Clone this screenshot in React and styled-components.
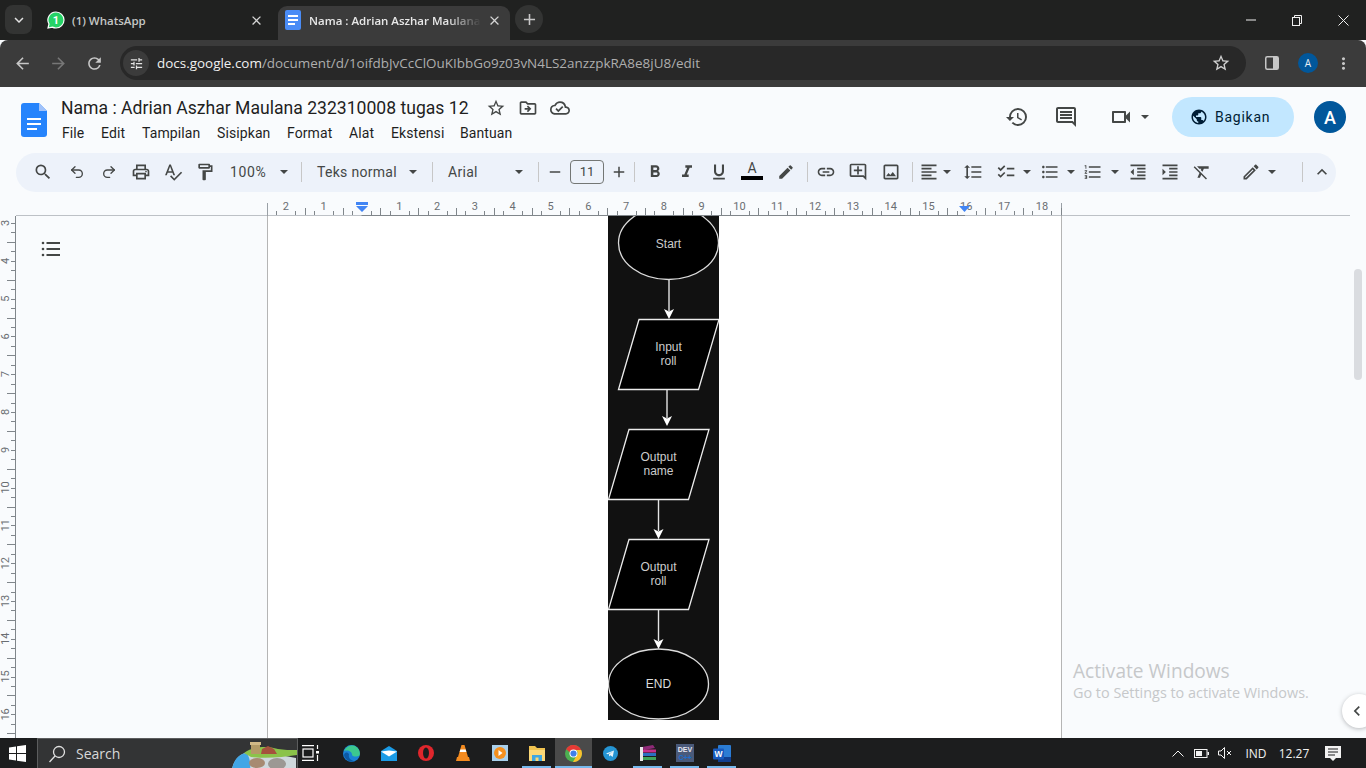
import styled, { createGlobalStyle } from "styled-components";
import { Undo2, Redo2 } from "lucide-react";
import {
  MdAdd,
  MdArrowBack,
  MdArrowForward,
  MdChecklist,
  MdClose,
  MdExpandLess,
  MdFormatAlignLeft,
  MdFormatBold,
  MdFormatClear,
  MdFormatIndentDecrease,
  MdFormatIndentIncrease,
  MdFormatItalic,
  MdFormatLineSpacing,
  MdFormatListBulleted,
  MdFormatListNumbered,
  MdFormatUnderlined,
  MdHistory,
  MdInsertLink,
  MdKeyboardArrowDown,
  MdKeyboardArrowLeft,
  MdMoreVert,
  MdOutlineAddComment,
  MdOutlineCloudDone,
  MdOutlineDriveFileMove,
  MdOutlineEdit,
  MdEdit,
  MdOutlineFormatPaint,
  MdOutlineImage,
  MdOutlinePrint,
  MdOutlineTune,
  MdPublic,
  MdRefresh,
  MdRemove,
  MdSearch,
  MdSpellcheck,
  MdStarBorder,
  MdOutlineComment,
  MdOutlineVideocam,
} from "react-icons/md";

const GlobalStyle = createGlobalStyle`
  html, body {
    margin: 0;
    height: 100%;
    overflow: hidden;
    background: #f9fbfd;
  }
  * { box-sizing: border-box; }
`;

const Page = styled.div`
  width: 1366px;
  height: 768px;
  display: flex;
  flex-direction: column;
  font-family: "Open Sans", "Liberation Sans", sans-serif;
  overflow: hidden;
`;

/* ---------- browser chrome ---------- */

const TabStrip = styled.div`
  height: 40px;
  background: #202120;
  display: flex;
  align-items: flex-end;
  padding-left: 5px;
  flex-shrink: 0;
`;

const TabMenu = styled.div`
  width: 27px;
  height: 29px;
  border-radius: 8px;
  background: #333433;
  color: #e3e3e3;
  display: flex;
  align-items: center;
  justify-content: center;
  align-self: flex-start;
  margin-top: 5px;
  margin-right: 6px;
  font-size: 18px;
`;

const Tab = styled.div`
  width: ${(p) => p.$w}px;
  height: 34px;
  display: flex;
  align-items: center;
  border-radius: 9px 9px 0 0;
  background: ${(p) => (p.$active ? "#3b3b3b" : "transparent")};
  color: ${(p) => (p.$active ? "#e8e8e8" : "#c4c7c5")};
  padding: 0 ${(p) => p.$pr}px 6px ${(p) => p.$pl}px;
  margin-right: ${(p) => p.$mr || 0}px;
  font-size: 11.5px;
  font-weight: 600;
  flex-shrink: 0;
`;

const TabTitle = styled.span`
  margin-left: ${(p) => p.$ml}px;
  width: ${(p) => p.$w}px;
  white-space: nowrap;
  overflow: hidden;
  mask-image: ${(p) => (p.$fade ? "linear-gradient(to right, #000 80%, transparent)" : "none")};
`;

const TabClose = styled.span`
  display: flex;
  margin-left: auto;
  font-size: 15px;
  color: #d5d5d5;
`;

const NewTab = styled.div`
  width: 28px;
  height: 28px;
  border-radius: 50%;
  background: #333433;
  color: #c7c7c7;
  display: flex;
  align-items: center;
  justify-content: center;
  align-self: flex-start;
  margin-top: 5px;
  font-size: 19px;
`;

const WindowControls = styled.div`
  margin-left: auto;
  align-self: flex-start;
  height: 40px;
  display: flex;
  align-items: center;
  color: #f0f0f0;
`;

const WindowButton = styled.div`
  width: 46px;
  display: flex;
  justify-content: center;
`;

const UrlRow = styled.div`
  height: 47px;
  background: #3b3b3b;
  border-radius: 8px 8px 0 0;
  display: flex;
  align-items: center;
  padding-bottom: 1px;
  flex-shrink: 0;
  color: #c7c7c7;
`;

const NavButton = styled.div`
  width: ${(p) => p.$w || 36}px;
  display: flex;
  justify-content: center;
  font-size: ${(p) => p.$size || 19}px;
  color: ${(p) => p.$color || "#c7c7c7"};
  margin-left: ${(p) => p.$ml || 0}px;
  flex-shrink: 0;
`;

const AddressBar = styled.div`
  width: 1126px;
  height: 34px;
  margin-left: 8px;
  margin-right: 8px;
  padding: 0 3px;
  border-radius: 17px;
  background: #282828;
  display: flex;
  align-items: center;
  flex-shrink: 0;
`;

const SiteInfo = styled.div`
  width: 26px;
  height: 26px;
  border-radius: 50%;
  background: #3b3b3b;
  color: #e3e3e3;
  display: flex;
  align-items: center;
  justify-content: center;
  font-size: 15px;
`;

const Url = styled.div`
  margin-left: 8px;
  font-size: 13.45px;
  color: #aeaeae;
  white-space: nowrap;
  & b {
    font-weight: 400;
    color: #f0f0f0;
  }
`;

const BarStar = styled.div`
  margin-left: auto;
  margin-right: 12px;
  display: flex;
  font-size: 20px;
  color: #d0d0d0;
`;

const ChromeAvatar = styled.div`
  width: 20px;
  height: 20px;
  border-radius: 50%;
  background: #01579b;
  color: #e6eef5;
  font-size: 10px;
  display: flex;
  align-items: center;
  justify-content: center;
  margin-left: 8px;
  flex-shrink: 0;
`;

/* ---------- docs header ---------- */

const DocsHeader = styled.div`
  height: 66px;
  background: #f9fbfd;
  display: flex;
  align-items: flex-start;
  padding: 10px 20px 0 21px;
  flex-shrink: 0;
`;

const DocsLogo = styled.div`
  margin-top: 6px;
  margin-right: 14px;
  display: flex;
`;

const TitleBlock = styled.div`
  display: flex;
  flex-direction: column;
`;

const TitleRow = styled.div`
  display: flex;
  align-items: center;
  height: 22px;
  color: #444746;
`;

const DocTitle = styled.div`
  font-family: "Roboto", sans-serif;
  font-size: 17.58px;
  color: #1f1f1f;
  white-space: nowrap;
  margin-right: 17px;
`;

const TitleIcon = styled.span`
  display: flex;
  width: 32px;
  font-size: 20px;
`;

const MenuBar = styled.div`
  display: flex;
  margin-top: 4px;
  margin-left: 1px;
`;

const MenuItem = styled.div`
  font-family: "Roboto", sans-serif;
  font-size: 14px;
  letter-spacing: 0.1px;
  line-height: 20px;
  color: #1f1f1f;
  width: ${(p) => p.$w}px;
`;

const HeaderActions = styled.div`
  margin-left: auto;
  display: flex;
  align-items: center;
  height: 40px;
  color: #444746;
`;

const HeaderIcon = styled.span`
  display: flex;
  font-size: 24px;
  margin-right: ${(p) => p.$mr}px;
`;

const ShareButton = styled.div`
  width: 122px;
  height: 40px;
  border-radius: 20px;
  background: #c2e7ff;
  color: #001d35;
  display: flex;
  align-items: center;
  padding-left: 18px;
  font-family: "Roboto", sans-serif;
  font-size: 14px;
  letter-spacing: 0.75px;
  margin-right: 20px;
  & svg {
    font-size: 18px;
    margin-right: 7px;
  }
`;

const DocsAvatar = styled.div`
  width: 32px;
  height: 32px;
  border-radius: 50%;
  background: #01579b;
  color: #fff;
  font-family: "Roboto", sans-serif;
  font-size: 18px;
  font-weight: 500;
  display: flex;
  align-items: center;
  justify-content: center;
`;

/* ---------- formatting toolbar ---------- */

const ToolbarPill = styled.div`
  width: 1320px;
  height: 39px;
  margin-left: 16px;
  border-radius: 20px;
  background: #edf2fa;
  display: flex;
  align-items: center;
  padding: 0 0 2px 11px;
  color: #444746;
  flex-shrink: 0;
`;

const ToolButton = styled.div`
  width: ${(p) => p.$w || 32}px;
  margin-left: ${(p) => p.$ml || 0}px;
  display: flex;
  justify-content: center;
  align-items: center;
  font-size: ${(p) => p.$size || 20}px;
  flex-shrink: 0;
`;

const Caret = styled.span`
  width: 8px;
  height: 4px;
  margin-left: ${(p) => (p.$ml || 0) + 1}px;
  margin-right: ${(p) => (p.$mr || 0) + 1}px;
  flex-shrink: 0;
  border-left: 4px solid transparent;
  border-right: 4px solid transparent;
  border-top: 4px solid #444746;
`;

const Divider = styled.span`
  width: 1px;
  height: 20px;
  background: #c7c7c7;
  margin: 0 ${(p) => p.$mr ?? 5}px 0 ${(p) => p.$ml ?? 5}px;
  flex-shrink: 0;
`;

const SelectBox = styled.div`
  width: ${(p) => p.$w}px;
  padding: 0 ${(p) => p.$pr ?? 9}px 0 ${(p) => p.$pl}px;
  display: flex;
  align-items: center;
  justify-content: space-between;
  font-family: "Roboto", sans-serif;
  font-size: 14px;
  letter-spacing: ${(p) => p.$track ?? 0.3}px;
  color: #444746;
  flex-shrink: 0;
`;

const SizeBox = styled.div`
  width: 34px;
  height: 24px;
  margin: 0 4px;
  border: 1px solid #747775;
  border-radius: 4px;
  display: flex;
  align-items: center;
  justify-content: center;
  font-family: "Roboto", sans-serif;
  font-size: 13px;
  flex-shrink: 0;
`;

const TextColor = styled.div`
  width: 32px;
  margin-left: 1px;
  display: flex;
  flex-direction: column;
  align-items: center;
  font-family: "Roboto", sans-serif;
  font-size: 14px;
  line-height: 15px;
  margin-top: -3px;
  flex-shrink: 0;
`;

const ColorBar = styled.span`
  width: 22px;
  height: 4px;
  background: #000;
`;

/* ---------- rulers and document ---------- */

const RulerRow = styled.svg`
  display: block;
  flex-shrink: 0;
`;

const Workspace = styled.div`
  position: relative;
  flex: 1;
  display: flex;
  background: #f9fbfd;
  overflow: hidden;
`;

const SideRuler = styled.svg`
  display: block;
  flex-shrink: 0;
`;

const Outline = styled.div`
  width: 251px;
  flex-shrink: 0;
  padding: 24px 0 0 25px;
`;

const Sheet = styled.div`
  width: 795px;
  flex-shrink: 0;
  background: #fff;
  border-left: 1px solid #b5b5b5;
  border-right: 1px solid #b5b5b5;
  padding-left: 340px;
`;

const Flowchart = styled.svg`
  display: block;
`;

const ScrollThumb = styled.div`
  position: absolute;
  left: 1354px;
  top: 53px;
  width: 8px;
  height: 111px;
  border-radius: 4px;
  background: #dadce0;
`;

const Watermark = styled.div`
  position: absolute;
  left: 1073px;
  top: 443px;
  color: #c6c8ca;
  font-family: "Open Sans", sans-serif;
`;

const WatermarkTitle = styled.div`
  font-size: 19.1px;
  line-height: 24px;
`;

const WatermarkText = styled.div`
  font-size: 14.4px;
  line-height: 20px;
`;

const SidePanelToggle = styled.div`
  position: absolute;
  left: 1342px;
  top: 478px;
  width: 34px;
  height: 34px;
  padding-left: 5px;
  border-radius: 50%;
  background: #fff;
  box-shadow: 0 1px 4px rgba(60, 64, 67, 0.35);
  color: #444746;
  font-size: 20px;
  display: flex;
  align-items: center;
`;

/* ---------- taskbar ---------- */

const Taskbar = styled.div`
  height: 30px;
  background: #1c1d1e;
  display: flex;
  align-items: stretch;
  flex-shrink: 0;
  color: #f2f2f2;
`;

const StartButton = styled.div`
  width: 37px;
  padding-left: 9px;
  display: flex;
  align-items: center;
`;

const SearchBox = styled.div`
  position: relative;
  width: 261px;
  background: #333435;
  border: 1px solid #5c5d5e;
  border-bottom: none;
  display: flex;
  align-items: center;
  padding-left: 10px;
  font-family: "Open Sans", sans-serif;
  font-size: 14px;
  color: #d8d8d8;
  overflow: hidden;
`;

const SearchLabel = styled.span`
  margin-left: 10px;
`;

const SearchArt = styled.svg`
  position: absolute;
  right: 0;
  top: 0;
`;

const TaskCell = styled.div`
  position: relative;
  width: ${(p) => p.$w || 37}px;
  padding-right: ${(p) => p.$pr || 0}px;
  display: flex;
  align-items: center;
  justify-content: center;
  background: ${(p) => (p.$active ? "#4a4a4a" : "transparent")};
  &::after {
    content: "";
    display: ${(p) => (p.$open ? "block" : "none")};
    position: absolute;
    left: ${(p) => (p.$active ? 0 : 4)}px;
    right: ${(p) => (p.$active ? 0 : 4)}px;
    bottom: 0;
    height: 2px;
    background: #76b9ed;
  }
`;

const Tray = styled.div`
  margin-left: auto;
  display: flex;
  align-items: center;
  font-family: "Open Sans", sans-serif;
  font-size: 12px;
`;

const TrayItem = styled.div`
  width: ${(p) => p.$w}px;
  display: flex;
  justify-content: center;
  align-items: center;
`;

const cm = 37.8;
const zeroX = 361.5;
const hTicks = [];
for (let x = zeroX - 24 * (cm / 4); x < 1061; x += cm / 4) {
  if (x >= 268) hTicks.push(x);
}

function HorizontalRuler() {
  const numbers = [];
  for (let n = -2; n <= 18; n++) if (n !== 0) numbers.push(n);
  return (
    <RulerRow width="1366" height="24" viewBox="0 0 1366 24">
      <line x1="16" y1="23.5" x2="1350" y2="23.5" stroke="#bdc1c6" />
      <line x1={zeroX} y1="23.5" x2="965" y2="23.5" stroke="#80868b" />
      <line x1="267.5" y1="11" x2="267.5" y2="24" stroke="#9aa0a6" />
      <line x1="1061.5" y1="11" x2="1061.5" y2="24" stroke="#9aa0a6" />
      {hTicks.map((x, i) => {
        const steps = Math.round((x - zeroX) / (cm / 4));
        if (steps % 4 === 0) return null;
        const long = steps % 2 === 0;
        const px = Math.round(x) + 0.5;
        return <line key={i} x1={px} x2={px} y1={long ? 16 : 19} y2="23" stroke="#80868b" />;
      })}
      {numbers.map((n) => (
        <text
          key={n}
          x={zeroX + n * cm}
          y="18"
          textAnchor="middle"
          fontFamily="Roboto, sans-serif"
          fontSize="11"
          fill="#6a6e72"
        >
          {Math.abs(n)}
        </text>
      ))}
      <path d="M356 10h12v3h-12z M356 14h12l-6 6z" fill="#4285f4" />
      <path d="M959 14h11l-5.5 6z" fill="#4285f4" />
    </RulerRow>
  );
}

function VerticalRuler() {
  const numbers = [];
  for (let n = 3; n <= 16; n++) numbers.push(n);
  const ticks = [];
  for (let s = 0; s < 56; s++) ticks.push(s);
  return (
    <SideRuler width="16" height="522" viewBox="0 0 16 522">
      <line x1="15.5" y1="0" x2="15.5" y2="522" stroke="#80868b" />
      {ticks.map((s) => {
        const y = Math.round(7 + (s * cm) / 4) + 0.5;
        const long = s % 4 === 2;
        return <line key={s} x1={long ? 7 : 11} x2="15" y1={y} y2={y} stroke="#80868b" />;
      })}
      {numbers.map((n) => {
        const y = 7 + (n - 3) * cm;
        return (
          <text
            key={n}
            transform={`translate(8.5 ${y}) rotate(-90)`}
            textAnchor="middle"
            fontFamily="Roboto, sans-serif"
            fontSize="11"
            fill="#6a6e72"
          >
            {n}
          </text>
        );
      })}
    </SideRuler>
  );
}

function Arrow({ x, y1, y2 }) {
  return (
    <g>
      <line x1={x} y1={y1} x2={x} y2={y2 - 7} stroke="#e4e4e4" strokeWidth="1.4" />
      <path d={`M${x - 5} ${y2 - 9}l5 2.500 5-2.500-5 10z`} fill="#fff" />
    </g>
  );
}

function Shape({ x, y, lines }) {
  return (
    <g>
      <path
        d={`M${x} ${y + 70}L${x + 20.5} ${y}H${x + 100.5}L${x + 80} ${y + 70}Z`}
        fill="#000"
        stroke="#ececec"
        strokeWidth="1.3"
      />
      {lines.map((l, i) => (
        <text
          key={l}
          x={x + 50}
          y={y + 31 + i * 14.5}
          textAnchor="middle"
          fontFamily="Liberation Sans, sans-serif"
          fontSize="12"
          fill="#cccccc"
        >
          {l}
        </text>
      ))}
    </g>
  );
}

function FlowDiagram() {
  return (
    <Flowchart width="111" height="504" viewBox="0 0 111 504">
      <rect width="111" height="504" fill="#111" />
      <ellipse cx="60.5" cy="27" rx="50" ry="36.5" fill="#000" stroke="#dcdcdc" strokeWidth="1.3" />
      <text x="60.5" y="32" textAnchor="middle" fontFamily="Liberation Sans, sans-serif" fontSize="12" fill="#cccccc">
        Start
      </text>
      <Arrow x={61} y1={64} y2={102} />
      <Shape x={10.5} y={103.5} lines={["Input", "roll"]} />
      <Arrow x={59} y1={174} y2={209} />
      <Shape x={0.5} y={213.5} lines={["Output", "name"]} />
      <Arrow x={50.5} y1={284} y2={322} />
      <Shape x={0.5} y={323.5} lines={["Output", "roll"]} />
      <Arrow x={50.5} y1={394} y2={432} />
      <ellipse cx="50.5" cy="468" rx="50" ry="35" fill="#000" stroke="#dcdcdc" strokeWidth="1.3" />
      <text x="50.5" y="472" textAnchor="middle" fontFamily="Liberation Sans, sans-serif" fontSize="12" fill="#dcdcdc">
        END
      </text>
    </Flowchart>
  );
}

function DocsMark({ w, h }) {
  return (
    <svg width={w} height={h} viewBox="0 0 26 34">
      <path d="M3 0h15l8 8v23a3 3 0 0 1-3 3H3a3 3 0 0 1-3-3V3a3 3 0 0 1 3-3z" fill="#2684fc" />
      <path d="M18 0l8 8h-8z" fill="#a1c2fa" />
      <path d="M6 15h14v2H6zM6 20h14v2H6zM6 25h10v2H6z" fill="#fff" />
    </svg>
  );
}

function TabDocsIcon() {
  return (
    <svg width="16" height="20" viewBox="0 0 16 20">
      <rect width="16" height="20" rx="2" fill="#4a8cf6" />
      <path d="M3 5h10v2H3zM3 9h10v2H3zM3 13h7v2H3z" fill="#fff" />
    </svg>
  );
}

function WhatsAppIcon() {
  return (
    <svg width="18" height="18" viewBox="0 0 18 18">
      <path d="M9 1a8 8 0 0 1 0 16c-1.400 0-2.600-.3-3.700-.9L1 17l1-4A8 8 0 0 1 9 1z" fill="#25d366" stroke="#fff" strokeWidth="1.200" />
      <text x="9" y="13" textAnchor="middle" fontFamily="Roboto, sans-serif" fontSize="11" fontWeight="700" fill="#fff">
        1
      </text>
    </svg>
  );
}

function WindowsLogo() {
  return (
    <svg width="17" height="17" viewBox="0 0 17 17">
      <path d="M0 2.400L7 1.400V8H0zM8 1.200L17 0v8H8zM0 9h7v6.600L0 14.600zM8 9h9v8l-9-1.200z" fill="#fff" />
    </svg>
  );
}

function BeachArt() {
  return (
    <SearchArt width="66" height="30" viewBox="0 0 66 30">
      <path d="M1 30C3 20 10 13 20 13c14 0 30 3 45 6v11z" fill="#cfd8dc" />
      <path d="M1 30C3 20 9 14 16 14c3 6 4 11 3 16z" fill="#41a6e6" />
      <path d="M13 14c8-6 22-8 34-4 6 1 12 1 19 1v5c-14 2-30 4-46 2z" fill="#8bc34a" />
      <path d="M20 5h9v10h-9z" fill="#b39a66" />
      <path d="M19 3h11v3H19z" fill="#d1b886" />
      <path d="M31 10l6-3 6 3 3 5H30z" fill="#a5523d" />
      <ellipse cx="26" cy="24" rx="8" ry="5" fill="#a78a72" />
      <ellipse cx="46" cy="25" rx="9" ry="6" fill="#9d9894" />
    </SearchArt>
  );
}

function TaskViewIcon() {
  return (
    <svg width="18" height="16" viewBox="0 0 18 16" fill="none" stroke="#fff" strokeWidth="1.200">
      <path d="M0 .6h12M0 15.400h12" />
      <rect x="1" y="4" width="10" height="8" />
      <path d="M15.500 0v4M15.500 10v6" />
      <rect x="14" y="6" width="3" height="2.500" fill="#fff" stroke="none" />
    </svg>
  );
}

function EdgeIcon() {
  return (
    <svg width="17" height="17" viewBox="0 0 17 17">
      <circle cx="8.500" cy="8.500" r="8.500" fill="#1b83d6" />
      <path d="M1 6C3 1 9-1 13.500 2 16.500 4 17.500 8 16.500 10.500 14 12 9 12 9 9.500 9 6.500 5 4.500 1 6z" fill="#3cc98f" />
      <path d="M6 9c-1 4 2 7 6 7-5 2-10-1-11-6 1-3 3-3 5-1z" fill="#0c59a4" />
    </svg>
  );
}

function MailIcon() {
  return (
    <svg width="16" height="15" viewBox="0 0 16 15">
      <path d="M0 5L8 0l8 5v10H0z" fill="#1a9be6" />
      <path d="M0 5.500l8 5 8-5-8-1z" fill="#fff" />
    </svg>
  );
}

function OperaIcon() {
  return (
    <svg width="16" height="16" viewBox="0 0 16 16">
      <ellipse cx="8" cy="8" rx="8" ry="8" fill="#e0262c" />
      <ellipse cx="8" cy="8" rx="3" ry="5.500" fill="#1c1d1e" />
    </svg>
  );
}

function VlcIcon() {
  return (
    <svg width="14" height="16" viewBox="0 0 14 16">
      <path d="M5.500 0h3L12 12H2z" fill="#f48b1f" />
      <path d="M4.300 4.500h5.400l.6 2.500H3.700z" fill="#fff" />
      <path d="M1 12h12l1 4H0z" fill="#f48b1f" />
    </svg>
  );
}

function PlayerIcon() {
  return (
    <svg width="16" height="16" viewBox="0 0 16 16">
      <rect width="16" height="16" fill="#a9d0ec" />
      <circle cx="8" cy="8" r="6" fill="#f5901e" />
      <path d="M6.500 5l4 3-4 3z" fill="#fff" />
    </svg>
  );
}

function FolderIcon() {
  return (
    <svg width="16" height="16" viewBox="0 0 16 16">
      <path d="M0 1h6l2 2h8v13H0z" fill="#f0c350" />
      <path d="M0 5h16v11H0z" fill="#fbd878" />
      <path d="M3 10h10v6H3z" fill="#3fa7e3" />
      <rect x="6.500" y="12.500" width="3" height="3.500" fill="#fbd878" />
    </svg>
  );
}

function ChromeIcon() {
  return (
    <svg width="17" height="17" viewBox="0 0 17 17">
      <circle cx="8.500" cy="8.500" r="8.500" fill="#4caf50" />
      <path d="M1.100 4.200A8.500 8.500 0 0 1 16.200 5H8.500a3.500 3.500 0 0 0-3.300 2.400z" fill="#e53935" />
      <path d="M16.200 5A8.500 8.500 0 0 1 8 17l3.500-6.200A3.500 3.500 0 0 0 11 5z" fill="#fbc02d" />
      <circle cx="8.500" cy="8.500" r="4" fill="#fff" />
      <circle cx="8.500" cy="8.500" r="3.100" fill="#3f7fea" />
    </svg>
  );
}

function TelegramIcon() {
  return (
    <svg width="15" height="15" viewBox="0 0 15 15">
      <circle cx="7.500" cy="7.500" r="7.500" fill="#2595d4" />
      <path d="M3 7.500l8-3-1.300 6.500-2.300-1.700-1.200 1.200-.3-2.200L10 5.500 4.800 8.300z" fill="#e8f4fb" />
    </svg>
  );
}

function RarIcon() {
  return (
    <svg width="16" height="16" viewBox="0 0 16 16">
      <path d="M2 2l11-2 2 3-11 2z" fill="#8e2a78" />
      <rect x="3" y="4.500" width="13" height="3" fill="#c62f8c" />
      <rect x="3" y="8" width="13" height="3" fill="#2b6fc2" />
      <rect x="3" y="12" width="13" height="3" fill="#3fa35a" />
      <path d="M0 2h3v14H0z" fill="#e8e8e8" />
    </svg>
  );
}

function DevIcon() {
  return (
    <svg width="18" height="18" viewBox="0 0 18 18">
      <rect width="18" height="18" fill="#4a5a7a" />
      <text x="9" y="8" textAnchor="middle" fontFamily="Liberation Sans, sans-serif" fontSize="7" fontWeight="700" fill="#e8e8f0">
        DEV
      </text>
      <text x="9" y="15.500" textAnchor="middle" fontFamily="Liberation Sans, sans-serif" fontSize="7" fontWeight="700" fill="#1c6fd0">
        C++
      </text>
    </svg>
  );
}

function WordIcon() {
  return (
    <svg width="18" height="17" viewBox="0 0 18 17">
      <rect x="5" y="0" width="13" height="17" rx="1" fill="#2b7cd3" />
      <rect x="5" y="12" width="13" height="5" fill="#103f91" />
      <rect x="0" y="3.500" width="11" height="11" rx="1" fill="#185abd" />
      <text x="5.500" y="12" textAnchor="middle" fontFamily="Liberation Sans, sans-serif" fontSize="8.500" fontWeight="700" fill="#fff">
        W
      </text>
    </svg>
  );
}

export default function App() {
  return (
    <Page>
      <GlobalStyle />
      <TabStrip>
        <TabMenu>
          <MdKeyboardArrowDown />
        </TabMenu>
        <Tab $w={240} $pl={9} $pr={14}>
          <WhatsAppIcon />
          <TabTitle $ml={7} $w={120}>
            (1) WhatsApp
          </TabTitle>
          <TabClose>
            <MdClose />
          </TabClose>
        </Tab>
        <Tab $w={232} $pl={7} $pr={8} $active $mr={5}>
          <TabDocsIcon />
          <TabTitle $ml={8} $w={172} $fade>
            Nama : Adrian Aszhar Maulana
          </TabTitle>
          <TabClose>
            <MdClose />
          </TabClose>
        </Tab>
        <NewTab>
          <MdAdd />
        </NewTab>
        <WindowControls>
          <WindowButton>
            <svg width="10" height="2" viewBox="0 0 10 2">
              <path d="M0 1h10" stroke="#f0f0f0" />
            </svg>
          </WindowButton>
          <WindowButton>
            <svg width="10" height="11" viewBox="0 0 10 11" fill="none" stroke="#f0f0f0">
              <rect x=".5" y="2.500" width="7" height="8" />
              <path d="M2.500 2.500V.5h7v8h-2" />
            </svg>
          </WindowButton>
          <WindowButton>
            <svg width="11" height="11" viewBox="0 0 11 11" stroke="#f0f0f0">
              <path d="M.5.5l10 10M10.500.5l-10 10" />
            </svg>
          </WindowButton>
        </WindowControls>
      </TabStrip>
      <UrlRow>
        <NavButton $ml={4} $w={36}>
          <MdArrowBack />
        </NavButton>
        <NavButton $w={36} $color="#777">
          <MdArrowForward />
        </NavButton>
        <NavButton $w={36}>
          <MdRefresh />
        </NavButton>
        <AddressBar>
          <SiteInfo>
            <MdOutlineTune />
          </SiteInfo>
          <Url>
            <b>docs.google.com</b>/document/d/1oifdbJvCcClOuKIbbGo9z03vN4LS2anzzpkRA8e8jU8/edit
          </Url>
          <BarStar>
            <MdStarBorder />
          </BarStar>
        </AddressBar>
        <NavButton $w={36}>
          <svg width="14" height="14" viewBox="0 0 14 14">
            <rect x=".75" y=".75" width="12.500" height="12.500" rx="1.500" fill="none" stroke="#c7c7c7" strokeWidth="1.500" />
            <rect x="8" y="1" width="5" height="12" fill="#c7c7c7" />
          </svg>
        </NavButton>
        <ChromeAvatar>A</ChromeAvatar>
        <NavButton $w={50}>
          <MdMoreVert />
        </NavButton>
      </UrlRow>
      <DocsHeader>
        <DocsLogo>
          <DocsMark w={26} h={34} />
        </DocsLogo>
        <TitleBlock>
          <TitleRow>
            <DocTitle>Nama : Adrian Aszhar Maulana 232310008 tugas 12</DocTitle>
            <TitleIcon>
              <MdStarBorder />
            </TitleIcon>
            <TitleIcon>
              <MdOutlineDriveFileMove />
            </TitleIcon>
            <TitleIcon>
              <MdOutlineCloudDone />
            </TitleIcon>
          </TitleRow>
          <MenuBar>
            <MenuItem $w={39}>File</MenuItem>
            <MenuItem $w={41}>Edit</MenuItem>
            <MenuItem $w={75}>Tampilan</MenuItem>
            <MenuItem $w={70}>Sisipkan</MenuItem>
            <MenuItem $w={62}>Format</MenuItem>
            <MenuItem $w={42}>Alat</MenuItem>
            <MenuItem $w={69}>Ekstensi</MenuItem>
            <MenuItem $w={60}>Bantuan</MenuItem>
          </MenuBar>
        </TitleBlock>
        <HeaderActions>
          <HeaderIcon $mr={25}>
            <MdHistory />
          </HeaderIcon>
          <HeaderIcon $mr={31}>
            <MdOutlineComment />
          </HeaderIcon>
          <HeaderIcon $mr={7}>
            <MdOutlineVideocam />
          </HeaderIcon>
          <Caret $mr={22} />
          <ShareButton>
            <MdPublic />
            Bagikan
          </ShareButton>
          <DocsAvatar>A</DocsAvatar>
        </HeaderActions>
      </DocsHeader>
      <ToolbarPill>
        <ToolButton>
          <MdSearch />
        </ToolButton>
        <ToolButton $ml={2}>
          <Undo2 size={16} strokeWidth={2} />
        </ToolButton>
        <ToolButton>
          <Redo2 size={16} strokeWidth={2} />
        </ToolButton>
        <ToolButton>
          <MdOutlinePrint />
        </ToolButton>
        <ToolButton>
          <MdSpellcheck />
        </ToolButton>
        <ToolButton>
          <MdOutlineFormatPaint />
        </ToolButton>
        <SelectBox $w={75} $pl={9} $pr={7} $track={0.6}>
          100%
          <Caret />
        </SelectBox>
        <Divider />
        <SelectBox $w={120} $pl={10}>
          Teks normal
          <Caret />
        </SelectBox>
        <Divider />
        <SelectBox $w={95} $pl={10}>
          Arial
          <Caret />
        </SelectBox>
        <Divider />
        <ToolButton $w={22} $size={18}>
          <MdRemove />
        </ToolButton>
        <SizeBox>11</SizeBox>
        <ToolButton $w={22} $size={18}>
          <MdAdd />
        </ToolButton>
        <Divider $ml={4} $mr={4} />
        <ToolButton>
          <MdFormatBold />
        </ToolButton>
        <ToolButton>
          <MdFormatItalic />
        </ToolButton>
        <ToolButton>
          <MdFormatUnderlined />
        </ToolButton>
        <TextColor>
          A
          <ColorBar />
        </TextColor>
        <ToolButton $ml={2} $size={18}>
          <MdEdit />
        </ToolButton>
        <Divider $mr={2} />
        <ToolButton>
          <MdInsertLink />
        </ToolButton>
        <ToolButton>
          <MdOutlineAddComment />
        </ToolButton>
        <ToolButton $ml={1}>
          <MdOutlineImage />
        </ToolButton>
        <Divider $mr={4} />
        <ToolButton $w={24}>
          <MdFormatAlignLeft />
        </ToolButton>
        <Caret $ml={1} />
        <ToolButton $ml={5}>
          <MdFormatLineSpacing />
        </ToolButton>
        <ToolButton $ml={1}>
          <MdChecklist />
        </ToolButton>
        <Caret />
        <ToolButton $ml={2}>
          <MdFormatListBulleted />
        </ToolButton>
        <Caret />
        <ToolButton $ml={1}>
          <MdFormatListNumbered />
        </ToolButton>
        <Caret $ml={1} />
        <ToolButton $ml={2}>
          <MdFormatIndentDecrease />
        </ToolButton>
        <ToolButton>
          <MdFormatIndentIncrease />
        </ToolButton>
        <ToolButton>
          <MdFormatClear />
        </ToolButton>
        <ToolButton $ml={17}>
          <MdOutlineEdit />
        </ToolButton>
        <Caret />
        <Divider $ml={25} $mr={4} />
        <ToolButton $w={26} $ml={2}>
          <MdExpandLess />
        </ToolButton>
      </ToolbarPill>
      <HorizontalRuler />
      <Workspace>
        <VerticalRuler />
        <Outline>
          <svg width="20" height="18" viewBox="0 0 20 18" fill="#444746">
            <circle cx="2" cy="3" r="1.300" />
            <circle cx="2" cy="9" r="1.300" />
            <circle cx="2" cy="15" r="1.300" />
            <rect x="5.500" y="2" width="13.500" height="2" />
            <rect x="5.500" y="8" width="13.500" height="2" />
            <rect x="5.500" y="14" width="13.500" height="2" />
          </svg>
        </Outline>
        <Sheet>
          <FlowDiagram />
        </Sheet>
        <ScrollThumb />
        <Watermark>
          <WatermarkTitle>Activate Windows</WatermarkTitle>
          <WatermarkText>Go to Settings to activate Windows.</WatermarkText>
        </Watermark>
        <SidePanelToggle>
          <MdKeyboardArrowLeft />
        </SidePanelToggle>
      </Workspace>
      <Taskbar>
        <StartButton>
          <WindowsLogo />
        </StartButton>
        <SearchBox>
          <svg width="18" height="18" viewBox="0 0 18 18" fill="none" stroke="#e0e0e0" strokeWidth="1.300">
            <circle cx="11" cy="7" r="5.500" />
            <path d="M7 11l-5.500 6" />
          </svg>
          <SearchLabel>Search</SearchLabel>
          <BeachArt />
        </SearchBox>
        <TaskCell $w={35} $pr={9}>
          <TaskViewIcon />
        </TaskCell>
        <TaskCell>
          <EdgeIcon />
        </TaskCell>
        <TaskCell>
          <MailIcon />
        </TaskCell>
        <TaskCell>
          <OperaIcon />
        </TaskCell>
        <TaskCell>
          <VlcIcon />
        </TaskCell>
        <TaskCell>
          <PlayerIcon />
        </TaskCell>
        <TaskCell $open>
          <FolderIcon />
        </TaskCell>
        <TaskCell $open $active>
          <ChromeIcon />
        </TaskCell>
        <TaskCell>
          <TelegramIcon />
        </TaskCell>
        <TaskCell $open>
          <RarIcon />
        </TaskCell>
        <TaskCell $open>
          <DevIcon />
        </TaskCell>
        <TaskCell $open>
          <WordIcon />
        </TaskCell>
        <Tray>
          <TrayItem $w={20}>
            <svg width="12" height="7" viewBox="0 0 12 7" fill="none" stroke="#f2f2f2">
              <path d="M.5 6.500L6 1l5.500 5.500" />
            </svg>
          </TrayItem>
          <TrayItem $w={26}>
            <svg width="15" height="9" viewBox="0 0 15 9">
              <rect x=".5" y=".5" width="12.500" height="8" fill="none" stroke="#f2f2f2" />
              <rect x="2" y="2" width="6" height="5" fill="#f2f2f2" />
              <rect x="13.500" y="3" width="1.500" height="3" fill="#f2f2f2" />
            </svg>
          </TrayItem>
          <TrayItem $w={22}>
            <svg width="15" height="12" viewBox="0 0 15 12" fill="none" stroke="#f2f2f2">
              <path d="M.5 4h2.500L6.500.5v11L3 8H.5z" />
              <path d="M9 4l4 4M13 4l-4 4" />
            </svg>
          </TrayItem>
          <TrayItem $w={40}>IND</TrayItem>
          <TrayItem $w={36}>12.27</TrayItem>
          <TrayItem $w={42}>
            <svg width="16" height="15" viewBox="0 0 16 15">
              <path d="M0 0h16v12h-5l-3 3-3-3H0z" fill="#f2f2f2" />
              <path d="M3 3h10M3 6h10M3 9h7" stroke="#1c1d1e" />
            </svg>
          </TrayItem>
          <TrayItem $w={12} />
        </Tray>
      </Taskbar>
    </Page>
  );
}
